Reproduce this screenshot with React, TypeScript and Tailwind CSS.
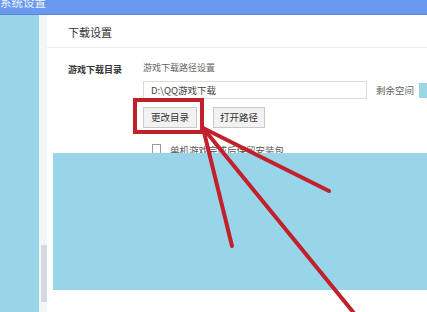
import React from "react";

const Annotation = () => (
  <svg
    className="pointer-events-none absolute inset-0"
    width="427"
    height="312"
    viewBox="0 0 427 312"
  >
    <g stroke="#c3202b" strokeWidth="4" fill="none" strokeLinecap="round">
      <rect x="135" y="100" width="67" height="32" strokeLinecap="butt" />
      <line x1="203" y1="128" x2="329" y2="191" />
      <line x1="203" y1="128" x2="232" y2="246" />
      <line x1="203" y1="128" x2="358" y2="318" />
    </g>
  </svg>
);

export default function App() {
  return (
    <div className="relative h-[312px] w-[427px] overflow-hidden bg-white font-['Noto_Sans_CJK_SC','Noto_Sans',sans-serif]">
      {/* title bar, cut at the top */}
      <header className="h-[15px] overflow-hidden border-b border-[#5b86d6] bg-[#6a9af0]">
        <span className="-mt-[3px] block whitespace-nowrap text-[11.5px] leading-none text-[#eef3fd]">
          系统设置
        </span>
      </header>

      <div className="flex h-[297px]">
        <aside className="w-[39px] shrink-0 bg-[#98d5e8]" />
        <div className="flex w-[8px] shrink-0 flex-col bg-[#f3f5f8] pl-[2px] pt-[230px]">
          <div className="h-[57px] w-[6px] bg-[#d5d8de]" />
        </div>

        <main className="flex min-w-0 flex-1 flex-col overflow-hidden">
          <div className="flex h-[33px] shrink-0 items-center border-b border-[#eeeeee] pl-[21px] pt-[3px]">
            <span className="text-[11px] leading-none text-[#333]">下载设置</span>
          </div>

          <div className="flex shrink-0 pl-[21px] pt-[14px]">
            <div className="w-[75px] shrink-0 whitespace-nowrap pt-[2px] text-[9px] font-bold leading-[12px] text-[#333]">
              游戏下载目录
            </div>
            <div className="flex shrink-0 flex-col">
              <span className="text-[9px] leading-[12px] text-[#666]">游戏下载路径设置</span>

              <div className="mt-[7px] flex h-[18px] items-center whitespace-nowrap">
                <div className="flex h-[18px] w-[224px] shrink-0 items-center border border-[#dcdcdc] pl-[7px] text-[9.5px] text-[#444]">
                  D:\QQ游戏下载
                </div>
                <span className="ml-[9px] shrink-0 text-[9.5px] text-[#666]">剩余空间</span>
                <div className="ml-[5px] h-[15px] w-[20px] shrink-0 bg-[#9ad5e8]" />
              </div>

              <div className="mt-[8px] flex">
                <button className="flex h-[21px] w-[54px] items-center justify-center border border-[#c9c9c9] bg-[#f2f2f2] text-[9.5px] text-[#333]">
                  更改目录
                </button>
                <button className="ml-[16px] flex h-[21px] w-[52px] items-center justify-center border border-[#c9c9c9] bg-[#f2f2f2] text-[9.5px] text-[#333]">
                  打开路径
                </button>
              </div>

              <div className="mt-[16px] flex h-[9px] items-start overflow-hidden whitespace-nowrap pl-[9px]">
                <div className="h-[12px] w-[9px] border border-[#999] bg-white" />
                <span className="ml-[9px] text-[9.5px] leading-[12px] text-[#555]">
                  单机游戏完成后保留安装包
                </span>
              </div>
            </div>
          </div>

          <div className="ml-[6px] h-[137px] shrink-0 bg-[#98d5e8]" />
        </main>
      </div>

      <Annotation />
    </div>
  );
}
